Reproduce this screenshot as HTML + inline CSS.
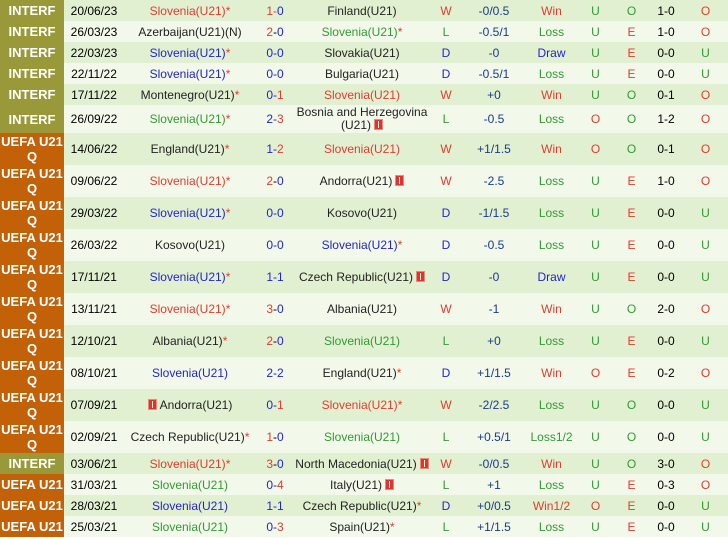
<!DOCTYPE html>
<html><head><meta charset="utf-8"><style>
body{margin:0;background:#fff;width:728px;height:539px;overflow:hidden;font-family:"Liberation Sans",Arial,sans-serif}
table{border-collapse:collapse;table-layout:fixed;width:728px}
td{padding:0;text-align:center;font-size:12px;line-height:14px;overflow:hidden;white-space:nowrap;border:0}
td.lg{color:#fff;font-weight:bold;font-size:13px;line-height:15px;white-space:normal}
tr.a td{background:#e2f0d2}tr.b td{background:#f2f9ea}
tr.a td.lg.i,tr.b td.lg.i{background:#99993a}tr.a td.lg.u,tr.b td.lg.u{background:#c26108}
.r{color:#e33b2e}.g{color:#339933}.bl{color:#2424c8}.k{color:#222}.h{color:#1a3a8a}
.s{color:#e33b2e}
.f{display:inline-block;width:7px;height:9px;background:#d33;border:1px solid #e87;vertical-align:-1px;margin-left:3px;position:relative}
.f:after{content:"";position:absolute;left:3px;top:1px;width:1px;height:7px;background:#ffd}
td.wrap{white-space:normal;line-height:13px}
</style></head><body>
<table>
<colgroup><col style="width:64px"><col style="width:60px"><col style="width:132px"><col style="width:38px"><col style="width:136px"><col style="width:32px"><col style="width:64px"><col style="width:51px"><col style="width:37px"><col style="width:35px"><col style="width:34px"><col style="width:45px"></colgroup>
<tr class="a" style="height:21px"><td class="lg i">INTERF</td><td>20/06/23</td><td class="r">Slovenia(U21)<span class="s">*</span></td><td><span class="r">1</span><span class="r">-</span><span class="bl">0</span></td><td class="k">Finland(U21)</td><td class="r">W</td><td class="h">-0/0.5</td><td class="r">Win</td><td class="g">U</td><td class="g">O</td><td>1-0</td><td class="r">O</td></tr>
<tr class="b" style="height:21px"><td class="lg i">INTERF</td><td>26/03/23</td><td class="k">Azerbaijan(U21)(N)</td><td><span class="r">2</span>-<span class="bl">0</span></td><td class="g">Slovenia(U21)<span class="s">*</span></td><td class="g">L</td><td class="h">-0.5/1</td><td class="g">Loss</td><td class="g">U</td><td class="r">E</td><td>1-0</td><td class="r">O</td></tr>
<tr class="a" style="height:21px"><td class="lg i">INTERF</td><td>22/03/23</td><td class="bl">Slovenia(U21)<span class="s">*</span></td><td class="bl">0-0</td><td class="k">Slovakia(U21)</td><td class="bl">D</td><td class="h">-0</td><td class="bl">Draw</td><td class="g">U</td><td class="r">E</td><td>0-0</td><td class="g">U</td></tr>
<tr class="b" style="height:21px"><td class="lg i">INTERF</td><td>22/11/22</td><td class="bl">Slovenia(U21)<span class="s">*</span></td><td class="bl">0-0</td><td class="k">Bulgaria(U21)</td><td class="bl">D</td><td class="h">-0.5/1</td><td class="g">Loss</td><td class="g">U</td><td class="r">E</td><td>0-0</td><td class="g">U</td></tr>
<tr class="a" style="height:21px"><td class="lg i">INTERF</td><td>17/11/22</td><td class="k">Montenegro(U21)<span class="s">*</span></td><td><span class="bl">0-</span><span class="r">1</span></td><td class="r">Slovenia(U21)</td><td class="r">W</td><td class="h">+0</td><td class="r">Win</td><td class="g">U</td><td class="g">O</td><td>0-1</td><td class="r">O</td></tr>
<tr class="b" style="height:28px"><td class="lg i">INTERF</td><td>26/09/22</td><td class="g">Slovenia(U21)<span class="s">*</span></td><td><span class="bl">2-</span><span class="r">3</span></td><td class="k wrap">Bosnia and Herzegovina<br>(U21)<span class="f"></span></td><td class="g">L</td><td class="h">-0.5</td><td class="g">Loss</td><td class="r">O</td><td class="g">O</td><td>1-2</td><td class="r">O</td></tr>
<tr class="a" style="height:32px"><td class="lg u">UEFA U21<br>Q</td><td>14/06/22</td><td class="k">England(U21)<span class="s">*</span></td><td><span class="bl">1-</span><span class="r">2</span></td><td class="r">Slovenia(U21)</td><td class="r">W</td><td class="h">+1/1.5</td><td class="r">Win</td><td class="r">O</td><td class="g">O</td><td>0-1</td><td class="r">O</td></tr>
<tr class="b" style="height:32px"><td class="lg u">UEFA U21<br>Q</td><td>09/06/22</td><td class="r">Slovenia(U21)<span class="s">*</span></td><td><span class="r">2</span>-<span class="bl">0</span></td><td class="k">Andorra(U21)<span class="f"></span></td><td class="r">W</td><td class="h">-2.5</td><td class="g">Loss</td><td class="g">U</td><td class="r">E</td><td>1-0</td><td class="r">O</td></tr>
<tr class="a" style="height:32px"><td class="lg u">UEFA U21<br>Q</td><td>29/03/22</td><td class="bl">Slovenia(U21)<span class="s">*</span></td><td class="bl">0-0</td><td class="k">Kosovo(U21)</td><td class="bl">D</td><td class="h">-1/1.5</td><td class="g">Loss</td><td class="g">U</td><td class="r">E</td><td>0-0</td><td class="g">U</td></tr>
<tr class="b" style="height:32px"><td class="lg u">UEFA U21<br>Q</td><td>26/03/22</td><td class="k">Kosovo(U21)</td><td class="bl">0-0</td><td class="bl">Slovenia(U21)<span class="s">*</span></td><td class="bl">D</td><td class="h">-0.5</td><td class="g">Loss</td><td class="g">U</td><td class="r">E</td><td>0-0</td><td class="g">U</td></tr>
<tr class="a" style="height:32px"><td class="lg u">UEFA U21<br>Q</td><td>17/11/21</td><td class="bl">Slovenia(U21)<span class="s">*</span></td><td class="bl">1-1</td><td class="k">Czech Republic(U21)<span class="f"></span></td><td class="bl">D</td><td class="h">-0</td><td class="bl">Draw</td><td class="g">U</td><td class="r">E</td><td>0-0</td><td class="g">U</td></tr>
<tr class="b" style="height:32px"><td class="lg u">UEFA U21<br>Q</td><td>13/11/21</td><td class="r">Slovenia(U21)<span class="s">*</span></td><td><span class="r">3</span>-<span class="bl">0</span></td><td class="k">Albania(U21)</td><td class="r">W</td><td class="h">-1</td><td class="r">Win</td><td class="g">U</td><td class="g">O</td><td>2-0</td><td class="r">O</td></tr>
<tr class="a" style="height:32px"><td class="lg u">UEFA U21<br>Q</td><td>12/10/21</td><td class="k">Albania(U21)<span class="s">*</span></td><td><span class="r">2</span>-<span class="bl">0</span></td><td class="g">Slovenia(U21)</td><td class="g">L</td><td class="h">+0</td><td class="g">Loss</td><td class="g">U</td><td class="r">E</td><td>0-0</td><td class="g">U</td></tr>
<tr class="b" style="height:32px"><td class="lg u">UEFA U21<br>Q</td><td>08/10/21</td><td class="bl">Slovenia(U21)</td><td class="bl">2-2</td><td class="k">England(U21)<span class="s">*</span></td><td class="bl">D</td><td class="h">+1/1.5</td><td class="r">Win</td><td class="r">O</td><td class="r">E</td><td>0-2</td><td class="r">O</td></tr>
<tr class="a" style="height:32px"><td class="lg u">UEFA U21<br>Q</td><td>07/09/21</td><td class="k"><span class="f" style="margin:0 3px 0 0"></span>Andorra(U21)</td><td><span class="bl">0-</span><span class="r">1</span></td><td class="r">Slovenia(U21)<span class="s">*</span></td><td class="r">W</td><td class="h">-2/2.5</td><td class="g">Loss</td><td class="g">U</td><td class="g">O</td><td>0-0</td><td class="g">U</td></tr>
<tr class="b" style="height:32px"><td class="lg u">UEFA U21<br>Q</td><td>02/09/21</td><td class="k">Czech Republic(U21)<span class="s">*</span></td><td><span class="r">1</span>-<span class="bl">0</span></td><td class="g">Slovenia(U21)</td><td class="g">L</td><td class="h">+0.5/1</td><td class="g">Loss1/2</td><td class="g">U</td><td class="g">O</td><td>0-0</td><td class="g">U</td></tr>
<tr class="a" style="height:21px"><td class="lg i">INTERF</td><td>03/06/21</td><td class="r">Slovenia(U21)<span class="s">*</span></td><td><span class="r">3</span>-<span class="bl">0</span></td><td class="k">North Macedonia(U21)<span class="f"></span></td><td class="r">W</td><td class="h">-0/0.5</td><td class="r">Win</td><td class="g">U</td><td class="g">O</td><td>3-0</td><td class="r">O</td></tr>
<tr class="b" style="height:21px"><td class="lg u">UEFA U21</td><td>31/03/21</td><td class="g">Slovenia(U21)</td><td><span class="bl">0-</span><span class="r">4</span></td><td class="k">Italy(U21)<span class="f"></span></td><td class="g">L</td><td class="h">+1</td><td class="g">Loss</td><td class="g">U</td><td class="r">E</td><td>0-3</td><td class="r">O</td></tr>
<tr class="a" style="height:21px"><td class="lg u">UEFA U21</td><td>28/03/21</td><td class="bl">Slovenia(U21)</td><td class="bl">1-1</td><td class="k">Czech Republic(U21)<span class="s">*</span></td><td class="bl">D</td><td class="h">+0/0.5</td><td class="r">Win1/2</td><td class="r">O</td><td class="r">E</td><td>0-0</td><td class="g">U</td></tr>
<tr class="b" style="height:21px"><td class="lg u">UEFA U21</td><td>25/03/21</td><td class="g">Slovenia(U21)</td><td><span class="bl">0-</span><span class="r">3</span></td><td class="k">Spain(U21)<span class="s">*</span></td><td class="g">L</td><td class="h">+1/1.5</td><td class="g">Loss</td><td class="g">U</td><td class="r">E</td><td>0-0</td><td class="g">U</td></tr>
</table>
</body></html>
